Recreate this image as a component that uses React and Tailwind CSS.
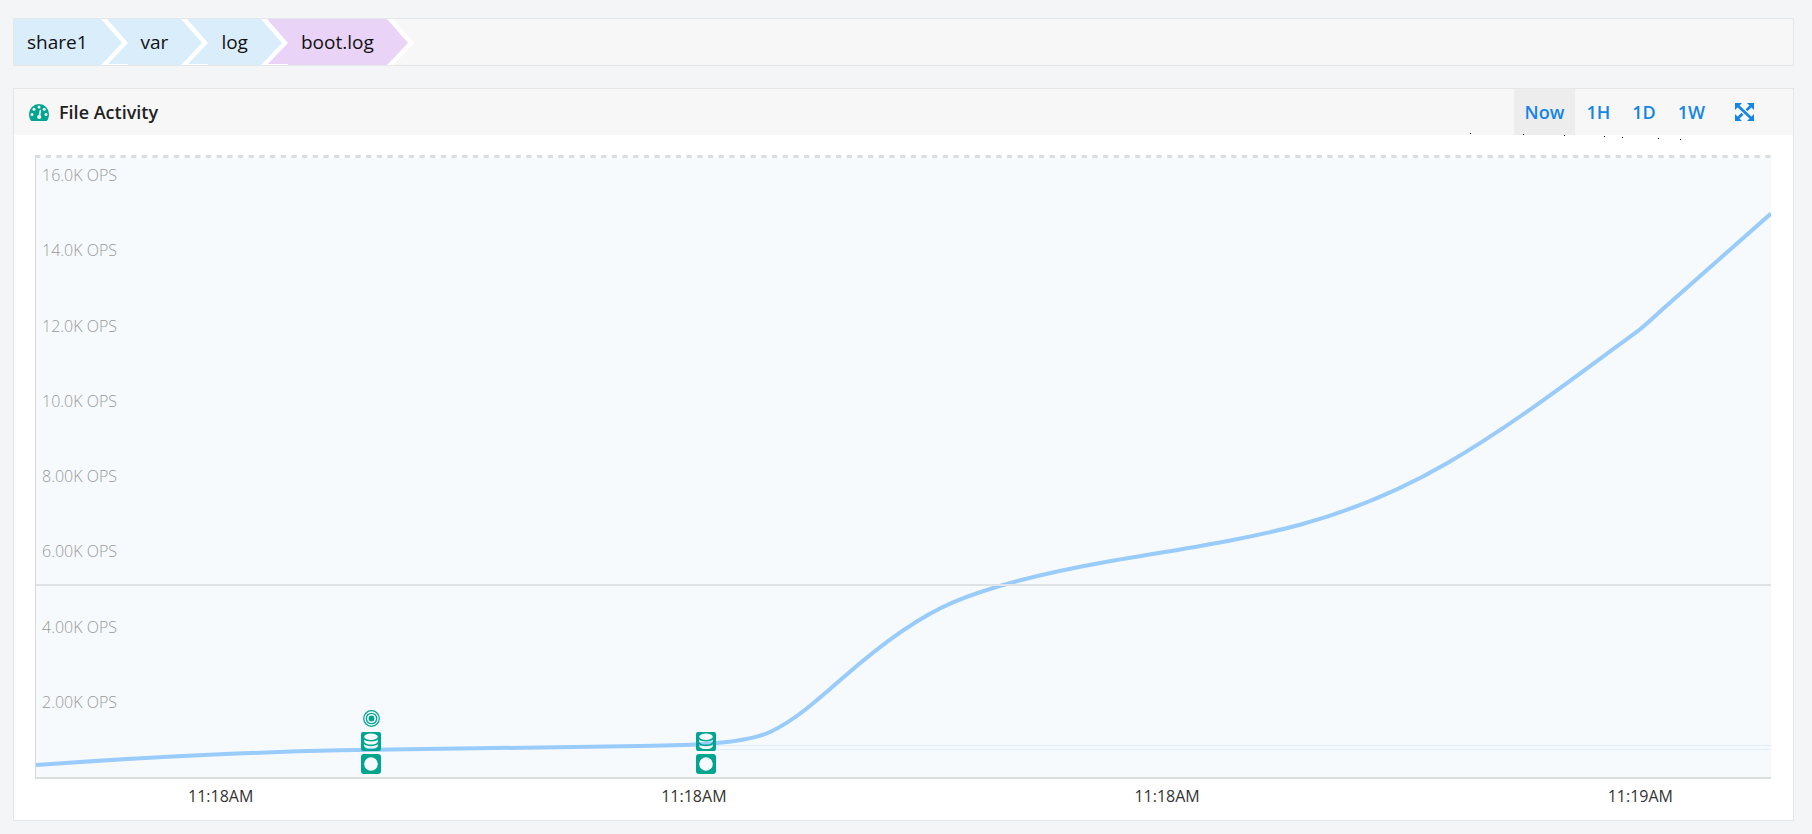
import { useState } from 'react';
import clsx from 'clsx';

const CRUMBS = ['share1', 'var', 'log', 'boot.log'];
const RANGES = ['Now', '1H', '1D', '1W'];
const Y_TICKS = ['16.0K', '14.0K', '12.0K', '10.0K', '8.00K', '6.00K', '4.00K', '2.00K'];
const X_TICKS = ['11:18AM', '11:18AM', '11:18AM', '11:19AM'];

const CHART_W = 1735;
const CHART_H = 619;

const LINE = `M0 607C100 600 200 594.5 304 592.3S504 589.8 604 588
  C654 587.4 708 586 734 574C759 562.5 784 540 809 518
  C842 489 879 460.5 917 444.3C964 424.6 1021 412.5 1071 403.7
  C1135 392.5 1204 383 1264 366.7C1320 351.5 1365 332 1411 305.3
  C1475 268.2 1540 218.5 1604 171.3Q1614 163 1626 151.7L1735 55.5`;

const MARKERS = [
  { x: 335, target: true },
  { x: 670, target: false },
];

const SPECKS = [[0, 0], [53, 1], [94, 2], [134, 3], [152, 4], [188, 5], [210, 6]];

function GaugeIcon() {
  return (
    <svg width="20" height="17" viewBox="0 0 20 17" className="text-[#00a58f]" aria-hidden="true">
      <path
        fill="currentColor"
        d="M10 0a10 10 0 0 1 10 10c0 2.4-.6 4.6-1.6 6.3q-.4.7-1.2.7H2.8q-.8 0-1.2-.7A12.400 12.400 0 0 1 0 10 10 10 0 0 1 10 0z"
      />
      <g fill="#f7f7f7">
        <circle cx="10" cy="3" r="1.500" />
        <circle cx="5" cy="5.200" r="1.500" />
        <circle cx="15.200" cy="5.200" r="1.500" />
        <circle cx="3" cy="10.500" r="1.500" />
        <circle cx="17" cy="10.500" r="1.500" />
        <circle cx="10.200" cy="13" r="2.100" />
      </g>
      <path d="M11.400 6.500L10.300 12.500" stroke="#f7f7f7" strokeWidth="1.600" strokeLinecap="round" />
    </svg>
  );
}

function ExpandIcon() {
  return (
    <svg width="19" height="18" viewBox="0 0 19 18" fill="currentColor" aria-hidden="true">
      <path d="M0 0h7L4.800 2.300 0 7zM19 0v7L12 0zM0 18v-7l7 7zM19 18h-7l7-7z" />
      <path d="M2 2l15 14M17 2l-5.500 5.200M2 16l5.500-5.200" stroke="currentColor" strokeWidth="2.600" />
    </svg>
  );
}

function TargetIcon() {
  return (
    <svg width="17" height="17" viewBox="0 0 17 17" fill="none" stroke="#00a58f" aria-hidden="true">
      <circle cx="8.500" cy="8.500" r="7.800" strokeWidth="1.200" />
      <circle cx="8.500" cy="8.500" r="5.200" strokeWidth="1.300" />
      <circle cx="8.500" cy="8.500" r="2.900" fill="#00a58f" stroke="none" />
    </svg>
  );
}

function DatabaseIcon() {
  return (
    <svg width="20" height="19" viewBox="0 0 20 19" fill="#00a58f" fillRule="evenodd" aria-hidden="true">
      <path
        d="M2 0h16a2 2 0 0 1 2 2v15a2 2 0 0 1-2 2H2a2 2 0 0 1-2-2V2a2 2 0 0 1 2-2z
          M3.200 4.800a6.800 3.200 0 0 0 13.600 0a6.800 3.200 0 0 0-13.600 0z
          M3.200 7.600c1.500 2.600 12.100 2.600 13.600 0v2.400c-1.500 3.400-12.100 3.400-13.600 0z
          M3.200 12.100c1.500 2.800 12.100 2.800 13.600 0v2.300c-1.500 3.400-12.100 3.400-13.600 0z"
      />
    </svg>
  );
}

function DiscIcon() {
  return (
    <svg width="20" height="20" viewBox="0 0 20 20" fill="#00a58f" fillRule="evenodd" aria-hidden="true">
      <path
        d="M3 0h14a3 3 0 0 1 3 3v14a3 3 0 0 1-3 3H3a3 3 0 0 1-3-3V3a3 3 0 0 1 3-3z
          M3.200 10a6.800 6.800 0 0 0 13.600 0a6.800 6.800 0 0 0-13.600 0z"
      />
    </svg>
  );
}

function Breadcrumbs() {
  return (
    <nav aria-label="Path" className="flex h-12 border border-[#e4e6e8] bg-[#f7f7f7]">
      {CRUMBS.map((name, i) => {
        const last = i === CRUMBS.length - 1;
        return (
          <a
            key={name}
            href={`#${name}`}
            className={clsx(
              'relative flex items-center pr-[13px] text-[19px] leading-6 text-[#111]',
              i === 0 ? 'pl-[13px]' : 'pl-10',
              last ? 'bg-[#e9d4f7]' : 'bg-[#daedfb]'
            )}
          >
            {name}
            <svg width="27" height="46" viewBox="0 0 27 46" className="absolute top-0 left-full z-10" aria-hidden="true">
              <path fill="#fff" d="M0 0h6l21 24L6 46H0z" />
              {!last && <path fill="#fff" d="M0 45h27v1H0z" />}
              <path fill={last ? '#e9d4f7' : '#daedfb'} d="M0 0l21 24L0 46z" />
            </svg>
          </a>
        );
      })}
    </nav>
  );
}

function ActivityChart() {
  return (
    <div className="pt-5 pr-[22px] pb-[14px] pl-[21px]">
      <div className="relative h-[624px] border-b-2 border-l border-b-[#dcdddd] border-l-[#d8d9da] bg-[#f6fafd]">
        <svg className="absolute top-0 left-0 h-[3px] w-full" aria-hidden="true">
          <rect width="100%" height="3" fill="#fff" />
          <line x1="-1" y1="1.500" x2="100%" y2="1.500" stroke="#dcdddd" strokeWidth="3" strokeDasharray="5.340 5.340" />
        </svg>
        <svg width="211" height="7" viewBox="0 0 211 7" className="absolute right-[90px] bottom-full mb-[15px]" aria-hidden="true">
          {SPECKS.map(([x, y]) => (
            <rect key={x} x={x} y={y} width="1" height="1" fill="#000" />
          ))}
        </svg>

        <ul className="flex h-full flex-col justify-between pt-[10px] pb-[65px] pl-[6px] text-[16px] leading-5 font-light text-[#999]">
          {Y_TICKS.map(t => (
            <li key={t}>{t} OPS</li>
          ))}
        </ul>

        <svg
          viewBox={`0 0 ${CHART_W} ${CHART_H}`}
          preserveAspectRatio="none"
          className="absolute bottom-0 left-0 h-[619px] w-full"
          role="img"
          aria-label="File operations over time"
        >
          <path d="M670 587.500H1735M670 591.500H1735" stroke="#dfeef8" fill="none" />
          <path d={LINE} stroke="#99cbfb" strokeWidth="4" fill="none" />
          <path d="M0 427H1735" stroke="#dfe2e4" strokeWidth="2" fill="none" />
        </svg>

        {MARKERS.map(m => (
          <div
            key={m.x}
            className="absolute bottom-[3px] flex -translate-x-1/2 flex-col items-center gap-[3px]"
            style={{ left: `${(m.x / CHART_W) * 100}%` }}
          >
            {m.target && (
              <span className="mb-[2px]">
                <TargetIcon />
              </span>
            )}
            <DatabaseIcon />
            <DiscIcon />
          </div>
        ))}
      </div>

      <ul className="flex justify-between pt-[7px] pr-[98px] pl-[153px] text-[16px] leading-5 text-[#333]">
        {X_TICKS.map((t, i) => (
          <li key={i}>{t}</li>
        ))}
      </ul>
    </div>
  );
}

export default function App() {
  const [range, setRange] = useState('Now');

  return (
    <main className="min-h-screen bg-[#f4f5f7] pt-[18px] pr-[18px] pb-3 pl-[13px] font-['Open_Sans',sans-serif]">
      <Breadcrumbs />

      <section className="mt-[22px] border border-[#e4e6e8] bg-white">
        <header className="flex h-[46px] items-center bg-[#f7f7f7] pl-[15px]">
          <GaugeIcon />
          <h1 className="ml-[10px] text-[18px] leading-6 font-semibold text-[#222]">File Activity</h1>
          <div className="ml-auto flex h-full pr-[28px] text-[18px] font-semibold text-[#1485e6]">
            {RANGES.map(r => (
              <button
                key={r}
                type="button"
                onClick={() => setRange(r)}
                className={clsx('h-full px-[11px]', range === r && 'bg-[#ededed]')}
              >
                {r}
              </button>
            ))}
            <button type="button" aria-label="Full screen" className="ml-2 h-full px-[11px]">
              <ExpandIcon />
            </button>
          </div>
        </header>
        <ActivityChart />
      </section>
    </main>
  );
}
